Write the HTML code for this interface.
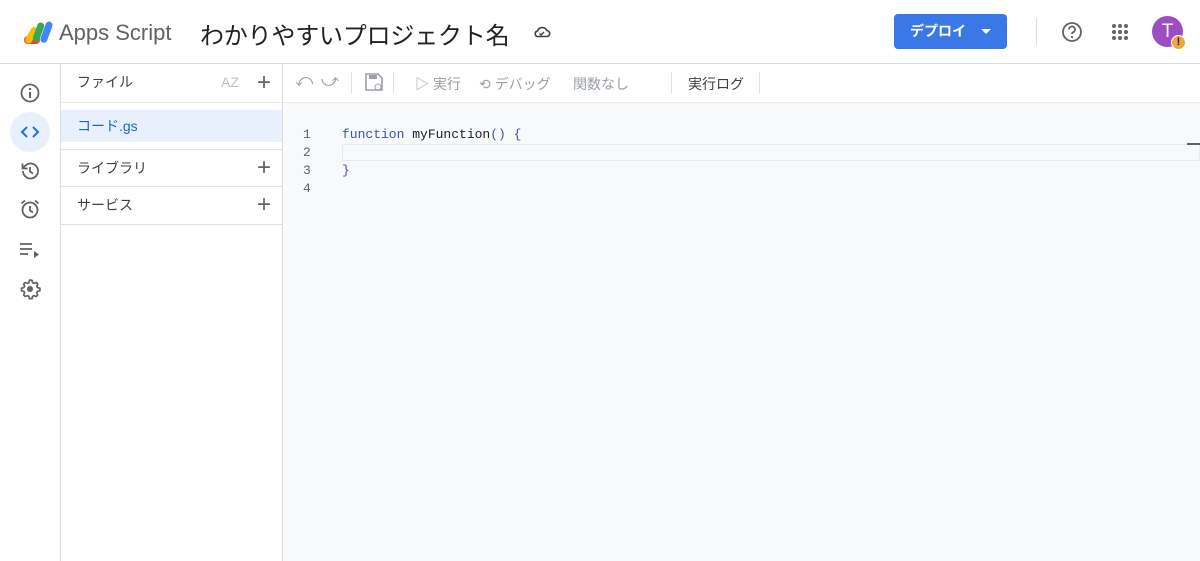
<!DOCTYPE html>
<html><head><meta charset="utf-8"><style>
*{margin:0;padding:0;box-sizing:border-box}
body{width:1200px;height:561px;overflow:hidden;background:#fff;font-family:"Liberation Sans","Noto Sans CJK JP",sans-serif;color:#3c4043;position:relative}
.abs{position:absolute}
.hdr{left:0;top:0;width:1200px;height:64px;border-bottom:1px solid #dadce0}
.rail{left:0;top:64px;width:61px;height:497px;border-right:1px solid #dadce0}
.files{left:61px;top:64px;width:222px;height:497px;border-right:1px solid #dadce0}
.editor{left:283px;top:103px;width:917px;height:458px;background:#f8f9fa}
.tb{left:283px;top:64px;width:917px;height:39px;border-bottom:1px solid #e8eaed}
.row{position:absolute;left:0;width:221px;font-size:14px;color:#3c4043}
.plus{position:absolute;right:11px;font-size:24px;font-weight:300;color:#5f6368;line-height:1}
.mono{font-family:"Liberation Mono","DejaVu Sans Mono",monospace;font-size:13px}
</style></head><body>
<div class="abs hdr">
 <svg class="abs" style="left:22px;top:20px" width="32" height="26" viewBox="0 0 32 26">
  <rect x="2" y="16" width="16" height="8" rx="4" fill="#ea4335"/>
  <rect x="6" y="6" width="7" height="18" rx="3.5" fill="#fbbc04" transform="rotate(30 9 15)"/>
  <rect x="13" y="2" width="7" height="20" rx="3.5" fill="#34a853" transform="rotate(20 16 12)"/>
  <rect x="21" y="1" width="7" height="22" rx="3.5" fill="#4285f4" transform="rotate(20 24 12)"/>
 </svg>
 <div class="abs" style="left:59px;top:20px;font-size:22px;color:#5f6368">Apps Script</div>
 <div class="abs" style="left:200px;top:16px;font-size:24px;color:#202124;letter-spacing:-0.2px">わかりやすいプロジェクト名</div>
 <svg class="abs" style="left:533px;top:24px" width="18" height="16" viewBox="0 0 18 16"><path d="M4.5 12.5h9a3 3 0 0 0 .3-6A5 5 0 0 0 4.5 7a2.8 2.8 0 0 0 0 5.5z" fill="none" stroke="#3c4043" stroke-width="1.6"/><path d="M6.5 9.5l1.5 1.5 3-3" fill="none" stroke="#3c4043" stroke-width="1.4"/></svg>
 <div class="abs" style="left:894px;top:14px;width:113px;height:35px;background:#3b78e7;border-radius:4px;color:#fff;font-size:14px;font-weight:bold;line-height:35px;padding-left:16px">デプロイ<span style="position:absolute;left:87px;top:15px;border-left:5px solid transparent;border-right:5px solid transparent;border-top:5px solid #fff"></span></div>
 <div class="abs" style="left:1036px;top:18px;width:1px;height:27px;background:#dadce0"></div>
 <svg class="abs" style="left:1061px;top:21px" width="22" height="22" viewBox="0 0 22 22"><circle cx="11" cy="11" r="9" fill="none" stroke="#5f6368" stroke-width="1.8"/><path d="M8 8.5a3 3 0 1 1 4.2 2.7c-.8.4-1.2.9-1.2 1.8" fill="none" stroke="#5f6368" stroke-width="1.8"/><circle cx="11" cy="16" r="1.1" fill="#5f6368"/></svg>
 <svg class="abs" style="left:1111px;top:23px" width="18" height="18" viewBox="0 0 18 18" fill="#5f6368"><circle cx="3" cy="3" r="2"/><circle cx="9" cy="3" r="2"/><circle cx="15" cy="3" r="2"/><circle cx="3" cy="9" r="2"/><circle cx="9" cy="9" r="2"/><circle cx="15" cy="9" r="2"/><circle cx="3" cy="15" r="2"/><circle cx="9" cy="15" r="2"/><circle cx="15" cy="15" r="2"/></svg>
 <div class="abs" style="left:1152px;top:16px;width:31px;height:31px;border-radius:50%;background:#9c4dc0;color:#fff;font-size:19px;text-align:center;line-height:31px">T</div>
 <div class="abs" style="left:1171px;top:35px;width:15px;height:15px;border-radius:50%;background:#e8a93a;border:1.5px solid #fff;color:#222;font-size:11px;font-weight:bold;text-align:center;line-height:12px">!</div>
</div>
<div class="abs rail">
 <svg class="abs" style="left:19px;top:18px" width="22" height="22" viewBox="0 0 22 22"><circle cx="11" cy="11" r="8.5" fill="none" stroke="#5f6368" stroke-width="1.8"/><rect x="10" y="10" width="2" height="6" fill="#5f6368"/><circle cx="11" cy="7" r="1.2" fill="#5f6368"/></svg>
 <div class="abs" style="left:10px;top:48px;width:40px;height:40px;border-radius:50%;background:#e8f0fe"></div>
 <svg class="abs" style="left:19px;top:58px" width="22" height="20" viewBox="0 0 22 20"><path d="M8 5l-5 5 5 5M14 5l5 5-5 5" fill="none" stroke="#1a73e8" stroke-width="2"/></svg>
 <svg class="abs" style="left:19px;top:96px" width="22" height="22" viewBox="0 0 22 22"><path d="M4 11a7.5 7.5 0 1 0 2.2-5.3L4 8" fill="none" stroke="#5f6368" stroke-width="1.8"/><path d="M3.5 3.5V8.5h5" fill="none" stroke="#5f6368" stroke-width="1.8"/><path d="M11 7v4.5l3 2" fill="none" stroke="#5f6368" stroke-width="1.8"/></svg>
 <svg class="abs" style="left:19px;top:134px" width="22" height="22" viewBox="0 0 22 22"><circle cx="11" cy="12" r="7.5" fill="none" stroke="#5f6368" stroke-width="1.8"/><path d="M11 8v4.5l3 2M2.5 5.5l3.5-3M19.5 5.5l-3.5-3" fill="none" stroke="#5f6368" stroke-width="1.8"/></svg>
 <svg class="abs" style="left:19px;top:177px" width="22" height="18" viewBox="0 0 22 18"><path d="M1 3h12M1 8h12M1 13h8" stroke="#5f6368" stroke-width="1.8"/><path d="M15 10l5 3.5-5 3.5z" fill="#5f6368"/></svg>
 <svg class="abs" style="left:18px;top:213px" width="24" height="24" viewBox="0 0 24 24"><path d="M12 3l2 .3.5 2.3 1.5.8 2.2-.9 1.5 1.5-.9 2.2.8 1.5 2.3.5v2.6l-2.3.5-.8 1.5.9 2.2-1.5 1.5-2.2-.9-1.5.8-.5 2.3h-2.6l-.5-2.3-1.5-.8-2.2.9-1.5-1.5.9-2.2-.8-1.5-2.3-.5v-2.6l2.3-.5.8-1.5-.9-2.2 1.5-1.5 2.2.9 1.5-.8.5-2.3z" fill="none" stroke="#5f6368" stroke-width="1.7" stroke-linejoin="round"/><circle cx="12" cy="12" r="3" fill="#5f6368"/></svg>
</div>
<div class="abs files">
 <div class="row" style="top:0;height:39px;line-height:37px;padding-left:16px;border-bottom:1px solid #e8eaed">ファイル
  <span style="position:absolute;left:160px;top:0;font-size:14px;color:#bdc1c6">AZ</span><span class="plus" style="top:7px">+</span></div>
 <div class="row" style="top:46px;height:32px;line-height:32px;padding-left:16px;background:#e8f0fe;color:#1967d2">コード.gs</div>
 <div class="row" style="top:85px;height:38px;line-height:36px;padding-left:16px;border-top:1px solid #e0e0e0;border-bottom:1px solid #e0e0e0">ライブラリ<span class="plus" style="top:6px">+</span></div>
 <div class="row" style="top:123px;height:38px;line-height:36px;padding-left:16px;border-bottom:1px solid #e0e0e0">サービス<span class="plus" style="top:6px">+</span></div>
</div>
<div class="abs tb" style="font-size:14px;color:#9aa0a6">
 <span class="abs" style="left:12px;top:7px;font-size:17px">⤺</span>
 <span class="abs" style="left:38px;top:7px;font-size:17px">⤻</span>
 <div class="abs" style="left:68px;top:8px;width:1px;height:22px;background:#e0e0e0"></div>
 <svg class="abs" style="left:80px;top:7px" width="22" height="22" viewBox="0 0 22 22"><path d="M3 3h12l4 4v12H3z" fill="none" stroke="#9aa0a6" stroke-width="1.6"/><rect x="6" y="4" width="8" height="4" fill="#9aa0a6"/><circle cx="15" cy="16" r="3" fill="none" stroke="#9aa0a6"/></svg>
 <div class="abs" style="left:110px;top:8px;width:1px;height:22px;background:#e0e0e0"></div>
 <span class="abs" style="left:132px;top:10px">▷ 実行</span>
 <span class="abs" style="left:196px;top:10px">⟲ デバッグ</span>
 <span class="abs" style="left:290px;top:10px">関数なし</span>
 <div class="abs" style="left:388px;top:8px;width:1px;height:22px;background:#e0e0e0"></div>
 <span class="abs" style="left:405px;top:10px;color:#3c4043">実行ログ</span>
 <div class="abs" style="left:476px;top:8px;width:1px;height:22px;background:#e0e0e0"></div>
</div>
<div class="abs editor mono">
 <div class="abs" style="left:59px;top:41px;width:858px;height:17px;border:1px solid #e8eaed"></div>
 <div class="abs" style="left:904px;top:40px;width:13px;height:2px;background:#5f6368"></div>
 <div class="abs" style="left:20px;top:23px;line-height:18px;color:#5f6368">1<br>2<br>3<br>4</div>
 <div class="abs" style="left:59px;top:23px;line-height:18px;color:#202124"><span style="color:#3f51b5">function</span> myFunction<span style="color:#3f51b5">() {</span><br><br><span style="color:#3f51b5">}</span></div>
</div>
</body></html>
